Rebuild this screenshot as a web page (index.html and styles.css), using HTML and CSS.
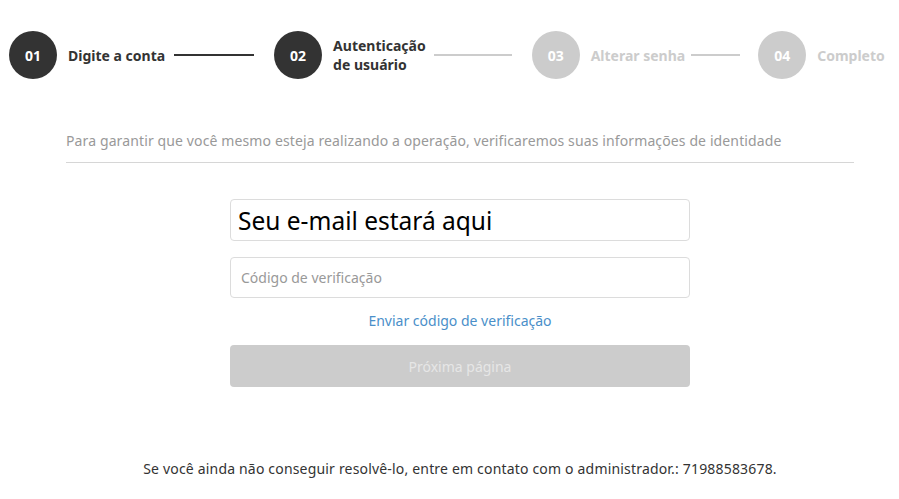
FILE: index.html
```html
<!DOCTYPE html>
<html lang="pt">
<head>
<meta charset="utf-8">
<title>Recuperar senha</title>
<link rel="stylesheet" href="styles.css">
</head>
<body>
<div class="steps">
  <div class="step done">
    <span class="circle">01</span>
    <span class="label">Digite a conta</span>
  </div>
  <span class="line line-1 dark"></span>
  <div class="step done">
    <span class="circle">02</span>
    <span class="label">Autenticação<br>de usuário</span>
  </div>
  <span class="line line-2"></span>
  <div class="step">
    <span class="circle">03</span>
    <span class="label">Alterar senha</span>
  </div>
  <span class="line line-3"></span>
  <div class="step">
    <span class="circle">04</span>
    <span class="label">Completo</span>
  </div>
</div>

<div class="content">
  <p class="intro">Para garantir que você mesmo esteja realizando a operação, verificaremos suas informações de identidade</p>
  <div class="form">
    <div class="field email">Seu e-mail estará aqui</div>
    <input class="field code" type="text" placeholder="Código de verificação">
    <a class="send" href="#">Enviar código de verificação</a>
    <button class="next" type="button" disabled>Próxima página</button>
  </div>
  <p class="footer">Se você ainda não conseguir resolvê-lo, entre em contato com o administrador.: 71988583678.</p>
</div>
</body>
</html>
```

FILE: styles.css
```css
* { box-sizing: border-box; }
body {
  margin: 0;
  background: #fff;
  font-family: "Noto Sans", "Open Sans", sans-serif;
  color: #333;
}
.steps {
  display: flex;
  align-items: center;
  padding: 31px 0 0 9px;
}
.step {
  display: flex;
  align-items: center;
  gap: 11px;
}
.circle {
  width: 48px;
  height: 48px;
  border-radius: 50%;
  background: #cccccc;
  color: #fff;
  font-weight: 700;
  font-size: 14px;
  display: flex;
  align-items: center;
  justify-content: center;
}
.label {
  font-size: 14px;
  font-weight: 700;
  line-height: 19px;
  color: #cccccc;
}
.step.done .circle { background: #333333; }
.step.done .label { color: #333333; }
.line {
  height: 2px;
  background: #cccccc;
}
.line.dark { background: #333; }
.line-1 { width: 80px; margin: 0 20px 0 9px; }
.line-2 { width: 78px; margin: 0 20px 0 8px; }
.line-3 { width: 49px; margin: 0 18px 0 6px; }

.content {
  margin: 0 0 0 66px;
  width: 788px;
}
.intro {
  margin: 52px 0 0;
  padding-bottom: 11px;
  border-bottom: 1px solid #d6d6d6;
  font-size: 14px;
  line-height: 20px;
  letter-spacing: 0.12px;
  color: #999;
}
.form {
  width: 460px;
  margin: 36px auto 0;
  display: flex;
  flex-direction: column;
  align-items: stretch;
}
.field {
  height: 42px;
  border: 1px solid #dcdcdc;
  border-radius: 4px;
  font-family: inherit;
  padding: 0 10px;
}
.email {
  display: flex;
  align-items: center;
  padding: 0 7px;
  font-size: 24.5px;
  color: #000;
}
.code {
  margin-top: 16px;
  height: 41px;
  font-size: 14px;
  color: #333;
  outline: none;
}
.code::placeholder { color: #999; }
.send {
  align-self: center;
  margin-top: 13px;
  font-size: 14px;
  line-height: 20px;
  color: #4a8fc9;
  text-decoration: none;
}
.next {
  margin-top: 14px;
  height: 42px;
  border: none;
  border-radius: 4px;
  background: #cccccc;
  color: #e6e6e6;
  font-family: inherit;
  font-size: 14px;
}
.footer {
  margin: 72px 0 0;
  text-align: center;
  font-size: 14px;
  line-height: 20px;
  letter-spacing: 0.18px;
  color: #333;
}
```
